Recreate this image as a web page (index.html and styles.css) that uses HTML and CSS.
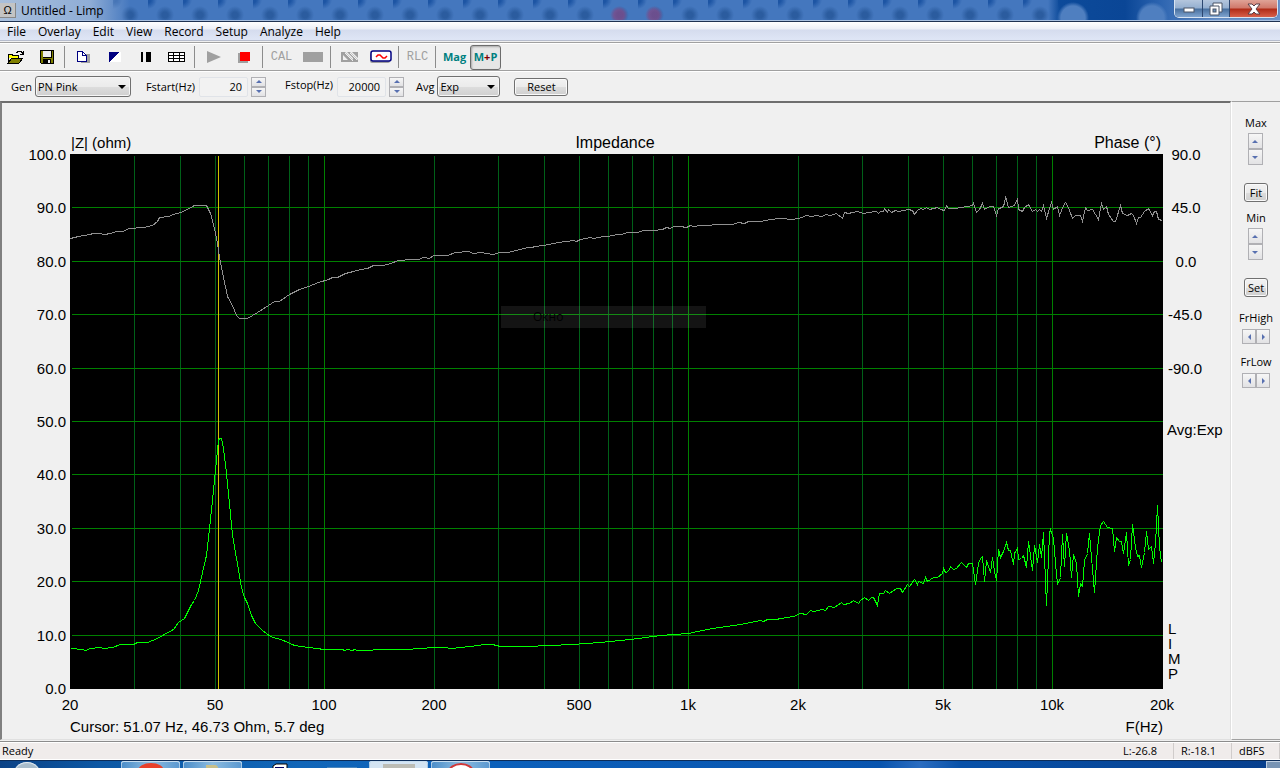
FILE: index.html
```html
<!DOCTYPE html>
<html lang="en">
<head>
<meta charset="utf-8"/>
<title>Untitled - Limp</title>
<link rel="stylesheet" href="styles.css">
</head>
<body>
<header class="titlebar">
  <span class="app-icon">Ω</span>
  <h1>Untitled - Limp</h1>
  <div class="window-buttons">
    <button class="win-min" aria-label="Minimize"><svg width="12" height="6"><rect x="1" y="1" width="10" height="4" fill="#fff" stroke="#4a5566"/></svg></button>
    <button class="win-max" aria-label="Restore"><svg width="14" height="14"><path d="M4 1h9v9h-3v3H1V4h3z" fill="#fff" stroke="#4a5566"/><path d="M4 4h6v6" fill="none" stroke="#4a5566"/><rect x="4" y="7" width="3" height="3" fill="#6d93bd" stroke="#4a5566"/></svg></button>
    <button class="win-close" aria-label="Close"><svg width="14" height="12"><path d="M1 1h4l2 2 2-2h4L9 6l4 5H9L7 9l-2 2H1l4-5z" fill="#fff" stroke="#5a4048"/></svg></button>
  </div>
</header>

<nav class="menubar">
  <a href="#">File</a><a href="#">Overlay</a><a href="#">Edit</a><a href="#">View</a><a href="#">Record</a><a href="#">Setup</a><a href="#">Analyze</a><a href="#">Help</a>
</nav>

<div class="toolbar">
  <button aria-label="Open">
    <svg width="18" height="16" shape-rendering="crispEdges"><path d="M1 5h4l1 1h6v3H1z" fill="#ff0"/><path d="M1 14V5h4v1h6v3" fill="none" stroke="#000"/><path d="M1 14l4-5h11l-4 5z" fill="#808000" stroke="#000"/><path d="M9 3h1V2h4v1h1v2M13 5h3V2" fill="none" stroke="#000"/></svg>
  </button>
  <button aria-label="Save">
    <svg width="16" height="16" shape-rendering="crispEdges"><path d="M1 1h14v14H2l-1-1z" fill="#000"/><path d="M2 2h2v7h9V2h1v12h-2v-4H4v4H2z" fill="#808000"/><path d="M4 2h8v6H4z" fill="#efefef"/><path d="M9 11h2v3H9z" fill="#efefef"/></svg>
  </button>
  <span class="sep"></span>
  <button aria-label="Copy">
    <svg width="15" height="14" shape-rendering="crispEdges"><rect x="5" y="4" width="9" height="9" fill="#a0a0a0"/><path d="M1 1h6l3 3v7H1z" fill="#fff"/><path d="M1 1h5l4 4v6H1zM6 1v4h4" fill="none" stroke="#000080"/></svg>
  </button>
  <button aria-label="Black and white">
    <svg width="14" height="12" shape-rendering="crispEdges"><rect x="1" y="1" width="12" height="10" fill="#fff"/><path d="M1 1h11L1 11z" fill="#000080"/></svg>
  </button>
  <button aria-label="Cursor">
    <svg width="12" height="12" shape-rendering="crispEdges"><rect x="1" y="1" width="2" height="10"/><rect x="6" y="1" width="5" height="10"/></svg>
  </button>
  <button aria-label="Grid">
    <svg width="18" height="12" shape-rendering="crispEdges"><rect x="1" y="1" width="16" height="10" fill="#fff"/><path d="M0 1h17v1H0zM0 4h17v1H0zM0 7h17v1H0zM0 10h17v1H0zM0 1h1v10H0zM5 1h1v10H5zM11 1h1v10h-1zM16 1h1v10h-1z"/></svg>
  </button>
  <span class="sep"></span>
  <button aria-label="Start">
    <svg width="16" height="12"><path d="M1 0v12l14-6z" fill="#a0a0a0"/></svg>
  </button>
  <button aria-label="Stop">
    <svg width="14" height="12" shape-rendering="crispEdges"><rect x="0" y="2" width="10" height="10" fill="#a0a0a0"/><rect x="2" y="1" width="10" height="9" fill="#f00"/></svg>
  </button>
  <span class="sep"></span>
  <button class="text-tool">CAL</button>
  <button aria-label="Level">
    <svg width="20" height="10"><rect width="20" height="10" fill="#a0a0a0"/></svg>
  </button>
  <span class="sep"></span>
  <button aria-label="Hatch">
    <svg width="18" height="12"><path d="M0 1h4l8 8V7L6 1h3l8 8v2H0zM2 4v5h5zM11 1h6v6z" fill="#a0a0a0" fill-rule="evenodd"/><path d="M4 2l8 8M9 2l7 7" stroke="#efefef"/></svg>
  </button>
  <button aria-label="Generator">
    <svg width="24" height="14"><rect x="1" y="3" width="20" height="10" rx="2" fill="#a0a0a0"/><rect x="2" y="1" width="20" height="10" rx="2" fill="#fff" stroke="#000080" stroke-width="1.5"/><path d="M7 7l2-2h2l3 3h2l2-2" fill="none" stroke="#f00" stroke-width="1.5"/></svg>
  </button>
  <span class="sep"></span>
  <button class="text-tool">RLC</button>
  <span class="sep"></span>
  <button class="mode">Mag</button>
  <button class="mode pressed">M<i>+</i>P</button>
</div>

<div class="params">
  <label for="gen">Gen</label>
  <div class="combo gen"><select id="gen"><option>PN Pink</option></select></div>
  <label for="fstart" class="fstart">Fstart(Hz)</label>
  <input id="fstart" type="text" value="20"/>
  <div class="spin"><button class="up" aria-label="Fstart up"></button><button class="down" aria-label="Fstart down"></button></div>
  <label for="fstop" class="fstop">Fstop(Hz)</label>
  <input id="fstop" type="text" value="20000"/>
  <div class="spin"><button class="up" aria-label="Fstop up"></button><button class="down" aria-label="Fstop down"></button></div>
  <label for="avg" class="avg">Avg</label>
  <div class="combo"><select id="avg"><option>Exp</option></select></div>
  <button class="push reset">Reset</button>
</div>

<main class="workspace">
  <section class="plot">
    <svg viewBox="2 103 1228 636" role="img" aria-label="Impedance">
      <rect x="70" y="154" width="1093" height="535"/>
      <g id="grid" transform="translate(.5 .5)" shape-rendering="crispEdges"></g>
      <g transform="translate(.5 .5)" shape-rendering="crispEdges" fill="none">
        <path class="cursor" d="M218 155V688"/>
        <polyline class="phase" points="70,238 78,236 89,234 93,233 98,233 104,234 110,233 116,231 123,231 128,228 143,227 152,225 157,221 159,217 168,216 173,214 180,212 187,209 194,205 206,205 210,213 214,228 217,243 219,257 223,277 227,296 232,305 236,315 239,318 247,318 252,315 257,312 268,305 274,301 279,301 289,294 299,289 308,286 318,282 328,279 332,277 337,277 345,273 353,271 360,269 367,268 373,265 377,265 383,265 390,263 398,260 412,259 418,259 423,257 429,258 433,255 447,255 455,252 468,251 473,253 480,252 493,254 499,252 508,252 511,251 520,249 527,247 531,247 535,246 543,245 553,243 558,242 573,240 576,241 580,239 590,237 593,238 603,236 607,236 617,234 621,234 627,232 637,232 643,230 653,230 662,229 666,227 670,228 673,226 680,226 686,227 690,225 693,226 700,225 723,224 732,224 738,222 744,223 748,221 760,221 770,219 780,218 792,219 802,217 805,215 812,216 815,215 822,216 825,214 830,215 836,213 842,218 844,212 848,213 852,212 857,211 863,213 868,212 876,211 878,213 880,211 883,211 884,208 887,212 888,209 891,212 895,210 898,211 908,209 912,210 914,214 917,210 920,208 923,209 926,207 929,209 937,207 940,209 944,210 946,205 948,208 952,208 955,208 960,207 967,206 972,205 973,203 976,212 979,209 982,203 984,209 989,206 993,206 996,215 998,208 1002,207 1004,203 1005,196 1008,207 1014,205 1017,198 1018,209 1022,211 1024,207 1028,204 1032,211 1035,209 1037,211 1039,209 1041,211 1043,205 1046,218 1049,208 1051,202 1053,209 1057,206 1059,215 1063,205 1065,202 1068,207 1072,218 1075,215 1080,215 1082,221 1085,207 1087,210 1092,209 1095,214 1098,219 1101,203 1103,209 1106,206 1108,214 1113,221 1115,221 1120,205 1122,213 1127,215 1131,213 1133,215 1136,223 1138,217 1140,217 1144,211 1148,208 1152,215 1154,211 1156,211 1158,219 1162,220"/>
        <polyline class="magnitude" points="71,648 82,649 85,650 90,648 100,647 103,648 112,647 120,644 133,644 137,642 147,642 157,638 162,635 173,629 178,622 184,618 191,604 194,600 198,590 202,572 206,555 209,528 212,500 215,470 217,450 218,440 219,438 221,438 223,448 226,473 229,503 232,535 236,558 241,587 244,597 247,603 251,615 255,623 262,630 270,636 283,640 294,645 308,647 324,649 342,649 344,650 347,649 352,650 354,649 357,650 367,650 378,649 405,649 420,648 434,647 443,647 452,648 460,647 470,646 484,644 492,644 500,646 525,646 550,645 572,644 600,642 630,639 660,635 688,633 697,631 712,628 740,624 750,622 760,620 763,621 767,619 775,619 787,617 793,616 800,613 806,614 810,610 813,611 822,609 825,610 828,606 834,607 841,602 843,604 849,603 853,600 858,603 860,600 864,597 868,600 871,597 873,597 877,605 879,593 883,593 885,590 889,593 896,588 900,588 902,592 907,584 909,586 914,579 917,584 918,581 923,583 925,577 927,581 933,577 937,577 942,573 943,568 945,572 948,571 950,566 953,569 956,568 961,562 966,567 968,563 972,563 975,584 978,563 980,558 982,556 984,581 986,560 990,572 992,557 994,571 996,580 998,549 1000,557 1003,551 1006,542 1008,550 1010,550 1013,564 1014,553 1017,548 1018,559 1021,558 1023,555 1026,567 1028,541 1032,570 1034,545 1037,562 1039,544 1041,557 1043,532 1046,605 1049,533 1050,529 1053,538 1055,563 1057,584 1060,577 1062,534 1064,566 1066,533 1069,550 1071,577 1073,554 1076,563 1078,596 1080,583 1082,586 1084,560 1087,553 1089,533 1091,557 1094,592 1097,547 1100,525 1103,521 1107,527 1112,528 1114,551 1116,537 1119,541 1121,541 1123,553 1126,532 1128,565 1130,559 1132,524 1135,547 1137,556 1139,555 1141,567 1144,552 1146,531 1148,549 1151,546 1153,563 1155,543 1157,505 1159,547 1161,562"/>
      </g>
      <g class="ghost"><rect x="501" y="306" width="205" height="22"/><text x="533" y="321">Окно</text></g>
      <g id="labels" class="labels"></g>
      <text class="heading" x="615" y="148" text-anchor="middle">Impedance</text>
      <text class="heading" x="1161" y="148" text-anchor="end">Phase (°)</text>
      <g class="labels">
        <text x="71" y="148">|Z| (ohm)</text>
        <text x="70" y="732">Cursor: 51.07 Hz, 46.73 Ohm, 5.7 deg</text>
        <text x="1163" y="732" text-anchor="end">F(Hz)</text>
        <text x="1167" y="435">Avg:Exp</text>
        <text x="1168" y="634">L</text>
        <text x="1168" y="649">I</text>
        <text x="1168" y="664">M</text>
        <text x="1168" y="679">P</text>
      </g>
    </svg>
  </section>

  <aside class="side">
    <span>Max</span>
    <div class="spin tall"><button class="up" aria-label="Max up"></button><button class="down" aria-label="Max down"></button></div>
    <button class="push">Fit</button>
    <span>Min</span>
    <div class="spin tall"><button class="up" aria-label="Min up"></button><button class="down" aria-label="Min down"></button></div>
    <button class="push">Set</button>
    <span class="wide">FrHigh</span>
    <div class="spin flat"><button class="left" aria-label="FrHigh down"></button><button class="right" aria-label="FrHigh up"></button></div>
    <span class="wide">FrLow</span>
    <div class="spin flat"><button class="left" aria-label="FrLow down"></button><button class="right" aria-label="FrLow up"></button></div>
  </aside>
</main>

<footer class="statusbar">
  <span class="ready">Ready</span>
  <span class="pane">L:-26.8</span>
  <span class="pane">R:-18.1</span>
  <span class="pane">dBFS</span>
</footer>

<div class="taskbar">
  <button class="orb" aria-label="Start menu"></button>
  <button class="task" aria-label="Opera"><svg width="26" height="6"><ellipse cx="13" cy="9" rx="13" ry="8" fill="#e8402a"/></svg></button>
  <button class="task" aria-label="Explorer"><svg width="26" height="6"><path d="M6 6V3h10l2 2v1z" fill="#c9c08a"/></svg></button>
  <button class="task plain" aria-label="Limp files"><svg width="16" height="8"><path d="M1 5l3-2h11v6H1z" fill="#fff" stroke="#000"/><path d="M3 6h9v4H3z" fill="#000060"/></svg></button>
  <button class="task plain" aria-label="Monitor"><svg width="30" height="8"><path d="M0 6h30v2H0z" fill="#4a86bd"/></svg></button>
  <button class="task active" aria-label="Limp"><svg width="32" height="6"><path d="M0 2h32v4H0z" fill="#bcbcb4"/></svg></button>
  <button class="task" aria-label="Yandex"><svg width="26" height="6"><ellipse cx="13" cy="10" rx="12" ry="8" fill="#fff" stroke="#d03838" stroke-width="2"/></svg></button>
  <button class="desktop" aria-label="Show desktop"></button>
</div>

<script>
const left = 70, right = 1162, top0 = 154, bottom = 688;
const grid = document.getElementById('grid');
const labels = document.getElementById('labels');
const svgns = 'http://www.w3.org/2000/svg';

function freqX(f) {
  return Math.round(left + (right - left) * Math.log10(f / 20) / 3);
}

function addLine(d, cls) {
  const p = document.createElementNS(svgns, 'path');
  p.setAttribute('d', d);
  p.setAttribute('class', cls);
  grid.appendChild(p);
}

function addLabel(x, y, text, anchor) {
  const t = document.createElementNS(svgns, 'text');
  t.setAttribute('x', x);
  t.setAttribute('y', y);
  t.setAttribute('text-anchor', anchor);
  t.textContent = text;
  labels.appendChild(t);
}

// vertical lines, log scale
[10, 100, 1000, 10000].forEach(decade => {
  for (let i = 1; i < 10; i++) {
    const f = decade * i;
    if (f <= 20 || f >= 20000) continue;
    addLine('M' + freqX(f) + ' 155V688', i === 1 ? 'major' : 'minor');
  }
});

// horizontal lines and left scale
for (let i = 0; i <= 10; i++) {
  const y = Math.round(top0 + (bottom - top0) * i / 10);
  if (i > 0 && i < 10) addLine('M71 ' + y + 'H1162', 'major');
  addLabel(66, y + 6, (100 - i * 10).toFixed(1), 'end');
}

['90.0', '45.0', '0.0', '-45.0', '-90.0'].forEach((text, i) => {
  const y = Math.round(top0 + (bottom - top0) * i / 10);
  addLabel(i < 3 ? 1186 : 1185, y + 6, text, 'middle');
});

[[20, '20'], [50, '50'], [100, '100'], [200, '200'], [500, '500'], [1000, '1k'], [2000, '2k'], [5000, '5k'], [10000, '10k'], [20000, '20k']].forEach(t => {
  addLabel(freqX(t[0]), 710, t[1], 'middle');
});
</script>
</body>
</html>
```
FILE: styles.css
```css
* {
  box-sizing: border-box;
}
body {
  margin: 0;
  min-height: 100vh;
  display: flex;
  flex-direction: column;
  background: #f0f0f0;
  color: #000;
  font-family: "Open Sans", "Noto Sans", sans-serif;
  font-size: 12px;
  line-height: 16px;
  overflow: hidden;
}
button, input, select {
  font: inherit;
  color: inherit;
  margin: 0;
  padding: 0;
}
svg {
  display: block;
}

/* title bar */
.titlebar {
  height: 22px;
  display: flex;
  align-items: center;
  border-bottom: 1px solid #1f3252;
  box-shadow: inset 0 -1px #a8c0e0;
  background:
    linear-gradient(90deg, #a9bfdb 0, #8fadd6 90px, rgba(74, 122, 190, 0) 130px),
    radial-gradient(circle at 619px 15px, rgba(150, 70, 130, .6) 5px, transparent 9px),
    radial-gradient(circle at 654px 15px, rgba(150, 70, 130, .6) 5px, transparent 9px),
    radial-gradient(circle at 1073px 18px, #4f7fc0 12px, transparent 16px),
    radial-gradient(circle at 1152px 18px, #4f7fc0 12px, transparent 16px),
    linear-gradient(90deg, transparent 1048px, #0c4a9a 1060px, #0a4696 1125px, #2c64b0 1160px, #6a94cc 1220px),
    radial-gradient(circle at 17px 15px, #2b5c9f 3px, transparent 9px) 358px 0 / 35px 22px,
    radial-gradient(circle at 0 0, #1d55a4 3px, transparent 9px) 358px 0 / 35px 22px,
    #4477be;
}
.app-icon {
  width: 16px;
  height: 15px;
  line-height: 14px;
  text-align: center;
  background: #c4c4c4;
  border-right: 1px solid #888;
  border-bottom: 1px solid #888;
  font-family: "Liberation Sans", sans-serif;
  font-size: 11px;
}
.titlebar h1 {
  margin: 0 0 0 5px;
  font-size: 12px;
  font-weight: normal;
}
.window-buttons {
  display: flex;
  align-self: flex-start;
  margin-left: auto;
  margin-right: 2px;
  border: 1px solid #d8e4f2;
  border-top: 0;
  border-radius: 0 0 5px 5px;
  overflow: hidden;
  box-shadow: 0 0 1px #1f3252;
}
.window-buttons button {
  width: 28px;
  height: 17px;
  display: flex;
  align-items: center;
  justify-content: center;
  border: 0;
  border-right: 1px solid #2c4770;
  background: linear-gradient(#b4c6dd 0, #94afd0 8px, #48709f 9px, #7fa4cf);
}
.window-buttons .win-min {
  padding-top: 3px;
}
.window-buttons .win-max {
  width: 27px;
}
.window-buttons .win-close {
  width: 47px;
  border-right: 0;
  background: linear-gradient(#dfa397 0, #d0786a 8px, #b02c18 9px, #d8604a);
}

/* menu */
.menubar {
  height: 21px;
  display: flex;
  gap: 12px;
  padding: 2px 7px;
  background: linear-gradient(#fff 0, #eceff7 7px, #d5dcee 8px, #dee5f5 17px);
  border-bottom: 1px solid #a0a0a0;
  box-shadow: inset 0 -1px #f0f0f0, inset 0 -2px #b6bccc;
}
.menubar a {
  color: #000;
  text-decoration: none;
}

/* toolbar */
.toolbar {
  height: 28px;
  display: flex;
  align-items: center;
  border-top: 1px solid #fff;
  border-bottom: 1px solid #a0a0a0;
}
.toolbar button {
  width: 31px;
  height: 25px;
  display: flex;
  align-items: center;
  justify-content: center;
  border: 0;
  background: none;
}
.toolbar .sep {
  width: 1px;
  height: 22px;
  margin: 0 3px 0 2px;
  background: #8c8c8c;
}
.toolbar .text-tool {
  font-family: "Liberation Mono", monospace;
  font-size: 12px;
  color: #a0a0a0;
}
.toolbar .mode {
  font-size: 11px;
  font-weight: bold;
  color: #008080;
}
.toolbar .mode i {
  font-style: normal;
  color: #800000;
}
.toolbar .pressed {
  border: 1px solid #6c6c6c;
  border-radius: 3px;
  background: #e6e6e6;
  box-shadow: inset 1px 1px 2px #a8a8a8;
}

/* generator settings */
.params {
  height: 30px;
  display: flex;
  align-items: center;
  padding-left: 11px;
  border-top: 1px solid #fff;
  font-size: 11px;
}
.params .fstart {
  margin-left: 15px;
}
.params .fstop {
  margin-left: 19px;
  padding-bottom: 3px;
}
.params .avg {
  margin-left: 12px;
}
.params input {
  width: 49px;
  height: 20px;
  margin: 0 3px 0 4px;
  padding-right: 5px;
  text-align: right;
  border: 1px solid #e0e3e8;
  border-radius: 2px;
  background: #f2f2f2;
}
.combo {
  position: relative;
  margin-left: 3px;
}
.combo select {
  width: 63px;
  height: 21px;
  padding-left: 2px;
  appearance: none;
  border: 1px solid #707070;
  border-radius: 3px;
  background: linear-gradient(#f2f2f2 0, #ebebeb 50%, #dddddd 51%, #cfcfcf);
  box-shadow: inset 0 0 0 1px #f6f6f6;
}
.combo.gen select {
  width: 96px;
}
.combo::after {
  content: "";
  position: absolute;
  right: 5px;
  top: 9px;
  border: 4px solid transparent;
  border-top-color: #000;
  border-bottom: 0;
  pointer-events: none;
}
.push {
  border: 1px solid #707070;
  border-radius: 3px;
  background: linear-gradient(#f2f2f2 0, #ebebeb 50%, #dddddd 51%, #cfcfcf);
  box-shadow: inset 0 0 0 1px #fafafa;
}
.reset {
  width: 54px;
  height: 18px;
  margin-left: 14px;
  line-height: 14px;
}

/* small arrow buttons */
.spin {
  display: flex;
  flex-direction: column;
  width: 15px;
}
.spin button {
  width: 15px;
  height: 10px;
  display: flex;
  align-items: center;
  justify-content: center;
  border: 1px solid #b0b0b4;
  background: linear-gradient(#f6f6f6, #e2e2e4);
}
.spin button::before {
  content: "";
  border: 3px solid transparent;
}
.spin .up::before {
  border-top: 0;
  border-bottom-color: #5870b0;
}
.spin .down::before {
  border-bottom: 0;
  border-top-color: #5870b0;
}
.spin .left::before {
  border-left: 0;
  border-right-color: #5870b0;
}
.spin .right::before {
  border-right: 0;
  border-left-color: #5870b0;
}
.spin.tall button {
  height: 16px;
}
.spin.flat {
  flex-direction: row;
  width: 28px;
}
.spin.flat button {
  width: 14px;
  height: 15px;
}

/* plot */
.workspace {
  flex: 1;
  display: flex;
  padding-bottom: 1px;
}
.plot {
  flex: 1;
  border: solid;
  border-width: 2px 1px 1px 2px;
  border-color: #6e6e6e #e0e0e0 #e0e0e0 #808080;
}
.plot svg {
  width: 100%;
  height: auto;
}
.minor {
  stroke: #006018;
}
.major {
  stroke: #008000;
}
.cursor {
  stroke: #d2c000;
}
.phase {
  stroke: #909090;
}
.magnitude {
  stroke: #00ff00;
}
.labels text, .heading {
  font-family: "Liberation Sans", Arial, sans-serif;
  font-size: 15px;
}
.plot .heading {
  font-size: 16px;
}
.ghost rect {
  fill: #fff;
  fill-opacity: .08;
}
.ghost text {
  font-size: 12px;
  fill: #000;
}

/* right panel */
.side {
  width: 49px;
  display: flex;
  flex-direction: column;
  align-items: center;
  padding-top: 13px;
  border-left: 1px solid #fff;
  border-top: 1px solid #a0a0a0;
  border-bottom: 1px solid #a0a0a0;
  font-size: 11px;
}
.side .spin {
  margin-right: 2px;
  margin-top: 2px;
}
.side .push {
  width: 24px;
  height: 19px;
  line-height: 15px;
  margin: 18px 0 8px;
}
.side .wide {
  margin-top: 5px;
}
.side .flat {
  margin: 3px 0 5px;
}

/* status */
.statusbar {
  height: 19px;
  display: flex;
  align-items: center;
  border-top: 1px solid #8c8c8c;
  border-bottom: 1px solid #fff;
  box-shadow: inset 0 1px #fff;
  background: #f0eceb;
  font-size: 11px;
}
.ready {
  flex: 1;
  padding-left: 2px;
}
.pane {
  width: 58px;
  padding-left: 7px;
  border-right: 1px solid #d0cccb;
}
.pane:last-child {
  width: 48px;
}

/* taskbar */
.taskbar {
  height: 8px;
  display: flex;
  align-items: flex-start;
  border-top: 1px solid #0c2c58;
  overflow: hidden;
  background: linear-gradient(90deg, #0b4286 0, #0d58a4 100px, #1166b8 300px, #0c60ba 500px, #0854ae 880px, #2a6cc0 920px, #0851a8 960px, #063e8c);
}
.taskbar button {
  border: 0;
  flex-shrink: 0;
}
.orb {
  width: 28px;
  height: 28px;
  margin: 1px 80px 0 13px;
  border-radius: 50%;
  background: #a8bccb;
  box-shadow: inset 0 1px 1px #e8f0f6;
}
.task {
  width: 59px;
  height: 12px;
  display: flex;
  justify-content: center;
  align-items: flex-start;
  margin-right: 3px;
  border-radius: 3px 3px 0 0;
  background: linear-gradient(90deg, #4a8cc8, #8cbce0 50%, #5a98d0);
  box-shadow: inset 0 1px #c8def0, inset 1px 0 #a8c8e4, inset -1px 0 #a8c8e4;
}
.taskbar .task {
  padding-top: 1px;
}
.task.plain {
  background: none;
  box-shadow: none;
}
.taskbar .plain {
  padding-top: 0;
  padding-left: 10px;
}
.task.active {
  background: #d4e4f2;
}
.desktop {
  width: 14px;
  height: 12px;
  margin-left: auto;
  background: #7894b4;
  box-shadow: inset 1px 1px #c0d0e2;
}
```
